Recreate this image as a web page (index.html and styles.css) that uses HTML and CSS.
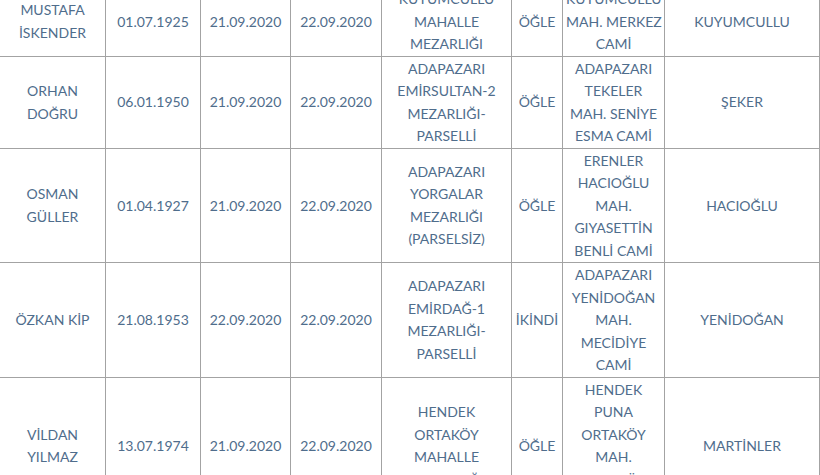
FILE: index.html
```html
<!DOCTYPE html>
<html lang="tr">
<head>
<meta charset="utf-8">
<link rel="stylesheet" href="styles.css">
</head>
<body>
<table class="vefat">
  <colgroup>
    <col class="c-name"><col class="c-date"><col class="c-date2"><col class="c-date3">
    <col class="c-yer"><col class="c-vakit"><col class="c-cami"><col class="c-mah">
  </colgroup>
  <tbody>
    <tr>
      <td>MUSTAFA<br>İSKENDER</td>
      <td>01.07.1925</td>
      <td>21.09.2020</td>
      <td>22.09.2020</td>
      <td>KUYUMCULLU<br>MAHALLE<br>MEZARLIĞI</td>
      <td>ÖĞLE</td>
      <td>KUYUMCULLU<br>MAH. MERKEZ<br>CAMİ</td>
      <td>KUYUMCULLU</td>
    </tr>
    <tr>
      <td>ORHAN<br>DOĞRU</td>
      <td>06.01.1950</td>
      <td>21.09.2020</td>
      <td>22.09.2020</td>
      <td>ADAPAZARI<br>EMİRSULTAN-2<br>MEZARLIĞI-<br>PARSELLİ</td>
      <td>ÖĞLE</td>
      <td>ADAPAZARI<br>TEKELER<br>MAH. SENİYE<br>ESMA CAMİ</td>
      <td>ŞEKER</td>
    </tr>
    <tr>
      <td>OSMAN<br>GÜLLER</td>
      <td>01.04.1927</td>
      <td>21.09.2020</td>
      <td>22.09.2020</td>
      <td>ADAPAZARI<br>YORGALAR<br>MEZARLIĞI<br>(PARSELSİZ)</td>
      <td>ÖĞLE</td>
      <td>ERENLER<br>HACIOĞLU<br>MAH.<br>GIYASETTİN<br>BENLİ CAMİ</td>
      <td>HACIOĞLU</td>
    </tr>
    <tr>
      <td>ÖZKAN KİP</td>
      <td>21.08.1953</td>
      <td>22.09.2020</td>
      <td>22.09.2020</td>
      <td>ADAPAZARI<br>EMİRDAĞ-1<br>MEZARLIĞI-<br>PARSELLİ</td>
      <td>İKİNDİ</td>
      <td>ADAPAZARI<br>YENİDOĞAN<br>MAH.<br>MECİDİYE<br>CAMİ</td>
      <td>YENİDOĞAN</td>
    </tr>
    <tr>
      <td>VİLDAN<br>YILMAZ</td>
      <td>13.07.1974</td>
      <td>21.09.2020</td>
      <td>22.09.2020</td>
      <td>HENDEK<br>ORTAKÖY<br>MAHALLE<br>MEZARLIĞI</td>
      <td>ÖĞLE</td>
      <td>HENDEK<br>PUNA<br>ORTAKÖY<br>MAH.<br>ORTAKÖY<br>CAMİ</td>
      <td>MARTİNLER</td>
    </tr>
  </tbody>
</table>
</body>
</html>
```

FILE: styles.css
```css
html, body {
  margin: 0;
  padding: 0;
  background: #ffffff;
  overflow: hidden;
}

.vefat {
  border-collapse: collapse;
  table-layout: fixed;
  width: 820px;
  margin: -14px 0 0 -1px;
  font-family: Lato, "Noto Sans", sans-serif;
  font-size: 14px;
  line-height: 22.5px;
  color: #4f6d8c;
}

.vefat td {
  border: 1px solid #a3a3a3;
  padding: 1px 3px 0;
  text-align: center;
  vertical-align: middle;
  white-space: nowrap;
}

.c-name { width: 106px; }
.c-date { width: 95px; }
.c-date2 { width: 90px; }
.c-date3 { width: 91px; }
.c-yer { width: 130px; }
.c-vakit { width: 51px; }
.c-cami { width: 102px; }
.c-mah { width: 155px; }
```
